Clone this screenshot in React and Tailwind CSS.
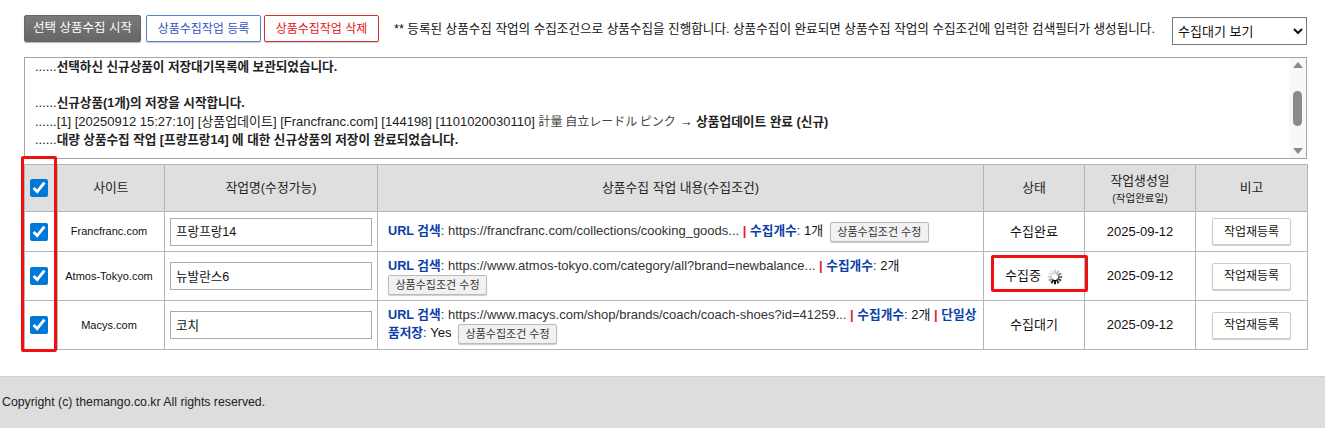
const FONT = "font-['Liberation_Sans','Noto_Sans_CJK_KR',sans-serif]";

function EditButton({ first }) {
  return (
    <button className={`inline-block h-[20px] w-[99px] align-middle rounded-[2px] border border-[#bbb] bg-[#f1f1f1] text-[11px] text-[#333] shadow-[0_1px_1px_rgba(0,0,0,0.2)] ${first ? "" : "ml-[3px]"}`}>
      상품수집조건 수정
    </button>
  );
}

function Label({ children }) {
  return <b className="font-bold text-[12.7px] text-[#0b3fa8]">{children}</b>;
}

function Sep() {
  return <b className="font-bold text-[#e02020]"> | </b>;
}

function Spinner() {
  const rays = [0, 30, 60, 90, 120, 150, 180, 210, 240, 270, 300, 330];
  const colors = ["#ccc", "#bbb", "#888", "#666", "#444", "#222", "#000", "#111", "#999", "#ccc", "#ddd", "#ddd"];
  return (
    <svg width="16" height="16" viewBox="0 0 16 16" className="inline-block align-middle ml-[6px]">
      {rays.map((r, i) => (
        <line key={r} x1="8" y1="0.8" x2="8" y2="5" stroke={colors[i]} strokeWidth="1.9" transform={`rotate(${r} 8 8)`} />
      ))}
    </svg>
  );
}

function Check() {
  return <input type="checkbox" defaultChecked className="block w-[18px] h-[18px] ml-[5px] accent-[#0078d7]" />;
}

const TH = "border border-[#b5b5b5] bg-[#dfdfdf] font-normal text-[12.8px] text-[#222] text-center";
const TD = "border border-[#b5b5b5] text-[#111] text-center";

function Row({ h, site, name, status, children }) {
  return (
    <tr className={h}>
      <td className={TD}><Check /></td>
      <td className={`${TD} text-[11px] pr-[4px]`}>{site}</td>
      <td className={`${TD} px-[5px]`}>
        <input defaultValue={name} className="block w-[202px] h-[28px] border border-[#aaa] px-[5px] pb-[2px] text-[12.6px] text-[#111]" />
      </td>
      <td className={`${TD} text-[13px] text-left pl-[10px] pr-[4px] leading-[18px] text-[#333]`}>{children}</td>
      <td className={`${TD} text-[13px]`}>{status}</td>
      <td className={`${TD} text-[13px]`}>2025-09-12</td>
      <td className={TD}>
        <button className="w-[79px] h-[27px] border border-[#ccc] rounded-[2px] bg-white text-[12px] text-[#111] shadow-[0_1px_1px_rgba(0,0,0,0.2)]">작업재등록</button>
      </td>
    </tr>
  );
}

export default function App() {
  return (
    <div className={`${FONT} w-[1325px] h-[437px] bg-white text-[#111] overflow-hidden`}>
      <div className="pl-[24px] pr-[18px]">
        {/* TOP BAR */}
        <div className="flex items-start pt-[15px] h-[57px]">
          <button className="w-[117px] h-[27px] rounded-[2px] border border-[#666] bg-gradient-to-b from-[#7a7a7a] to-[#666] text-white text-[12.5px] shadow-[0_1px_1px_rgba(0,0,0,0.3)]">선택 상품수집 시작</button>
          <button className="w-[115px] h-[27px] ml-[5px] rounded-[2px] border border-[#5b7fd0] bg-white text-[#2f55c0] text-[12px] shadow-[0_1px_1px_rgba(0,0,0,0.2)]">상품수집작업 등록</button>
          <button className="w-[115px] h-[27px] ml-[3px] rounded-[2px] border border-[#d93030] bg-white text-[#e01515] text-[12px] shadow-[0_1px_1px_rgba(0,0,0,0.2)]">상품수집작업 삭제</button>
          <p className="ml-[15px] w-[778px] mt-[7px] text-[12.6px] leading-[15px] whitespace-nowrap text-[#111]">
            ** 등록된 상품수집 작업의 수집조건으로 상품수집을 진행합니다. 상품수집이 완료되면 상품수집 작업의 수집조건에 입력한 검색필터가 생성됩니다.
          </p>
          <select className="w-[135px] h-[28px] mt-[2px] border border-[#777] pl-[1px] text-[13px] bg-white text-[#111]">
            <option>수집대기 보기</option>
          </select>
        </div>

        {/* LOG */}
        <div className="flex w-[1283px] h-[102px] border border-[#a5a5a5] overflow-hidden">
          <div className="flex-1 pl-[10px] text-[13px] leading-[18px] text-[#222] whitespace-nowrap">
            <div>......<b className="text-[12.6px]">선택하신 신규상품이 저장대기목록에 보관되었습니다.</b></div>
            <div className="h-[18px]" />
            <div>......<b className="text-[12.6px]">신규상품(1개)의 저장을 시작합니다.</b></div>
            <div>......[1] [20250912 15:27:10] [상품업데이트] [Francfranc.com] [144198] [1101020030110] <span className="font-['Noto_Sans_CJK_JP',sans-serif] text-[12px] text-[#444]">計量 自立レードル ピンク</span> → <b className="text-[12.7px]">상품업데이트 완료 (신규)</b></div>
            <div>......<b className="text-[12.6px]">대량 상품수집 작업 [프랑프랑14] 에 대한 신규상품의 저장이 완료되었습니다.</b></div>
          </div>
          {/* scrollbar */}
          <div className="w-[17px] bg-[#f8f8f8] flex flex-col items-center justify-between py-[4px]">
            <div className="w-0 h-0 border-x-[5px] border-x-transparent border-b-[6px] border-b-[#8a8a8a]" />
            <div className="w-[9px] h-[35px] rounded-[5px] bg-[#8a8a8a] mt-[20px]" />
            <div className="w-0 h-0 border-x-[5px] border-x-transparent border-t-[6px] border-t-[#8a8a8a] mt-[20px]" />
          </div>
        </div>

        {/* TABLE */}
        <div className="relative mt-[5px] w-[1283px]">
          <table className="w-[1283px] table-fixed border-collapse">
            <colgroup>
              <col className="w-[33px]" />
              <col className="w-[107px]" />
              <col className="w-[213px]" />
              <col className="w-[606px]" />
              <col className="w-[101px]" />
              <col className="w-[111px]" />
              <col className="w-[112px]" />
            </colgroup>
            <thead>
              <tr className="h-[47px]">
                <th className={TH}><Check /></th>
                <th className={TH}>사이트</th>
                <th className={TH}>작업명(수정가능)</th>
                <th className={TH}>상품수집 작업 내용(수집조건)</th>
                <th className={TH}>상태</th>
                <th className={TH}>
                  <div>작업생성일</div>
                  <div className="text-[10.5px] leading-[14px]">(작업완료일)</div>
                </th>
                <th className={TH}>비고</th>
              </tr>
            </thead>
            <tbody>
              <Row h="h-[40px]" site="Francfranc.com" name="프랑프랑14" status="수집완료">
                <Label>URL 검색</Label>: https://francfranc.com/collections/cooking_goods...<Sep /><Label>수집개수</Label>: <span className="text-[#111]">1개</span> <EditButton />
              </Row>
              <Row h="h-[49px]" site="Atmos-Tokyo.com" name="뉴발란스6" status={<span className="inline-block">수집중<Spinner /></span>}>
                <Label>URL 검색</Label>: https://www.atmos-tokyo.com/category/all?brand=newbalance...<Sep /><Label>수집개수</Label>: <span className="text-[#111]">2개</span>
                <br />
                <EditButton first />
              </Row>
              <Row h="h-[49px]" site="Macys.com" name="코치" status="수집대기">
                <Label>URL 검색</Label>: https://www.macys.com/shop/brands/coach/coach-shoes?id=41259...<Sep /><Label>수집개수</Label>: <span className="text-[#111]">2개</span><Sep /><Label>단일상품저장</Label>: <span className="text-[#111]">Yes</span> <EditButton />
              </Row>
            </tbody>
          </table>
          {/* red highlight boxes */}
          <div className="absolute left-[-3px] top-[-8px] w-[36px] h-[196px] border-[3px] border-[#f01010] rounded-[2px] pointer-events-none" />
          <div className="absolute left-[967px] top-[91px] w-[97px] h-[37px] border-[3px] border-[#f01010] rounded-[2px] pointer-events-none" />
        </div>
      </div>

      {/* FOOTER */}
      <div className="mt-[26px] h-[52px] bg-[#dddddd] border-t border-[#cfcfcf] pl-[2px] flex items-center text-[12.3px] text-[#222]">
        Copyright (c) themango.co.kr All rights reserved.
      </div>
    </div>
  );
}
